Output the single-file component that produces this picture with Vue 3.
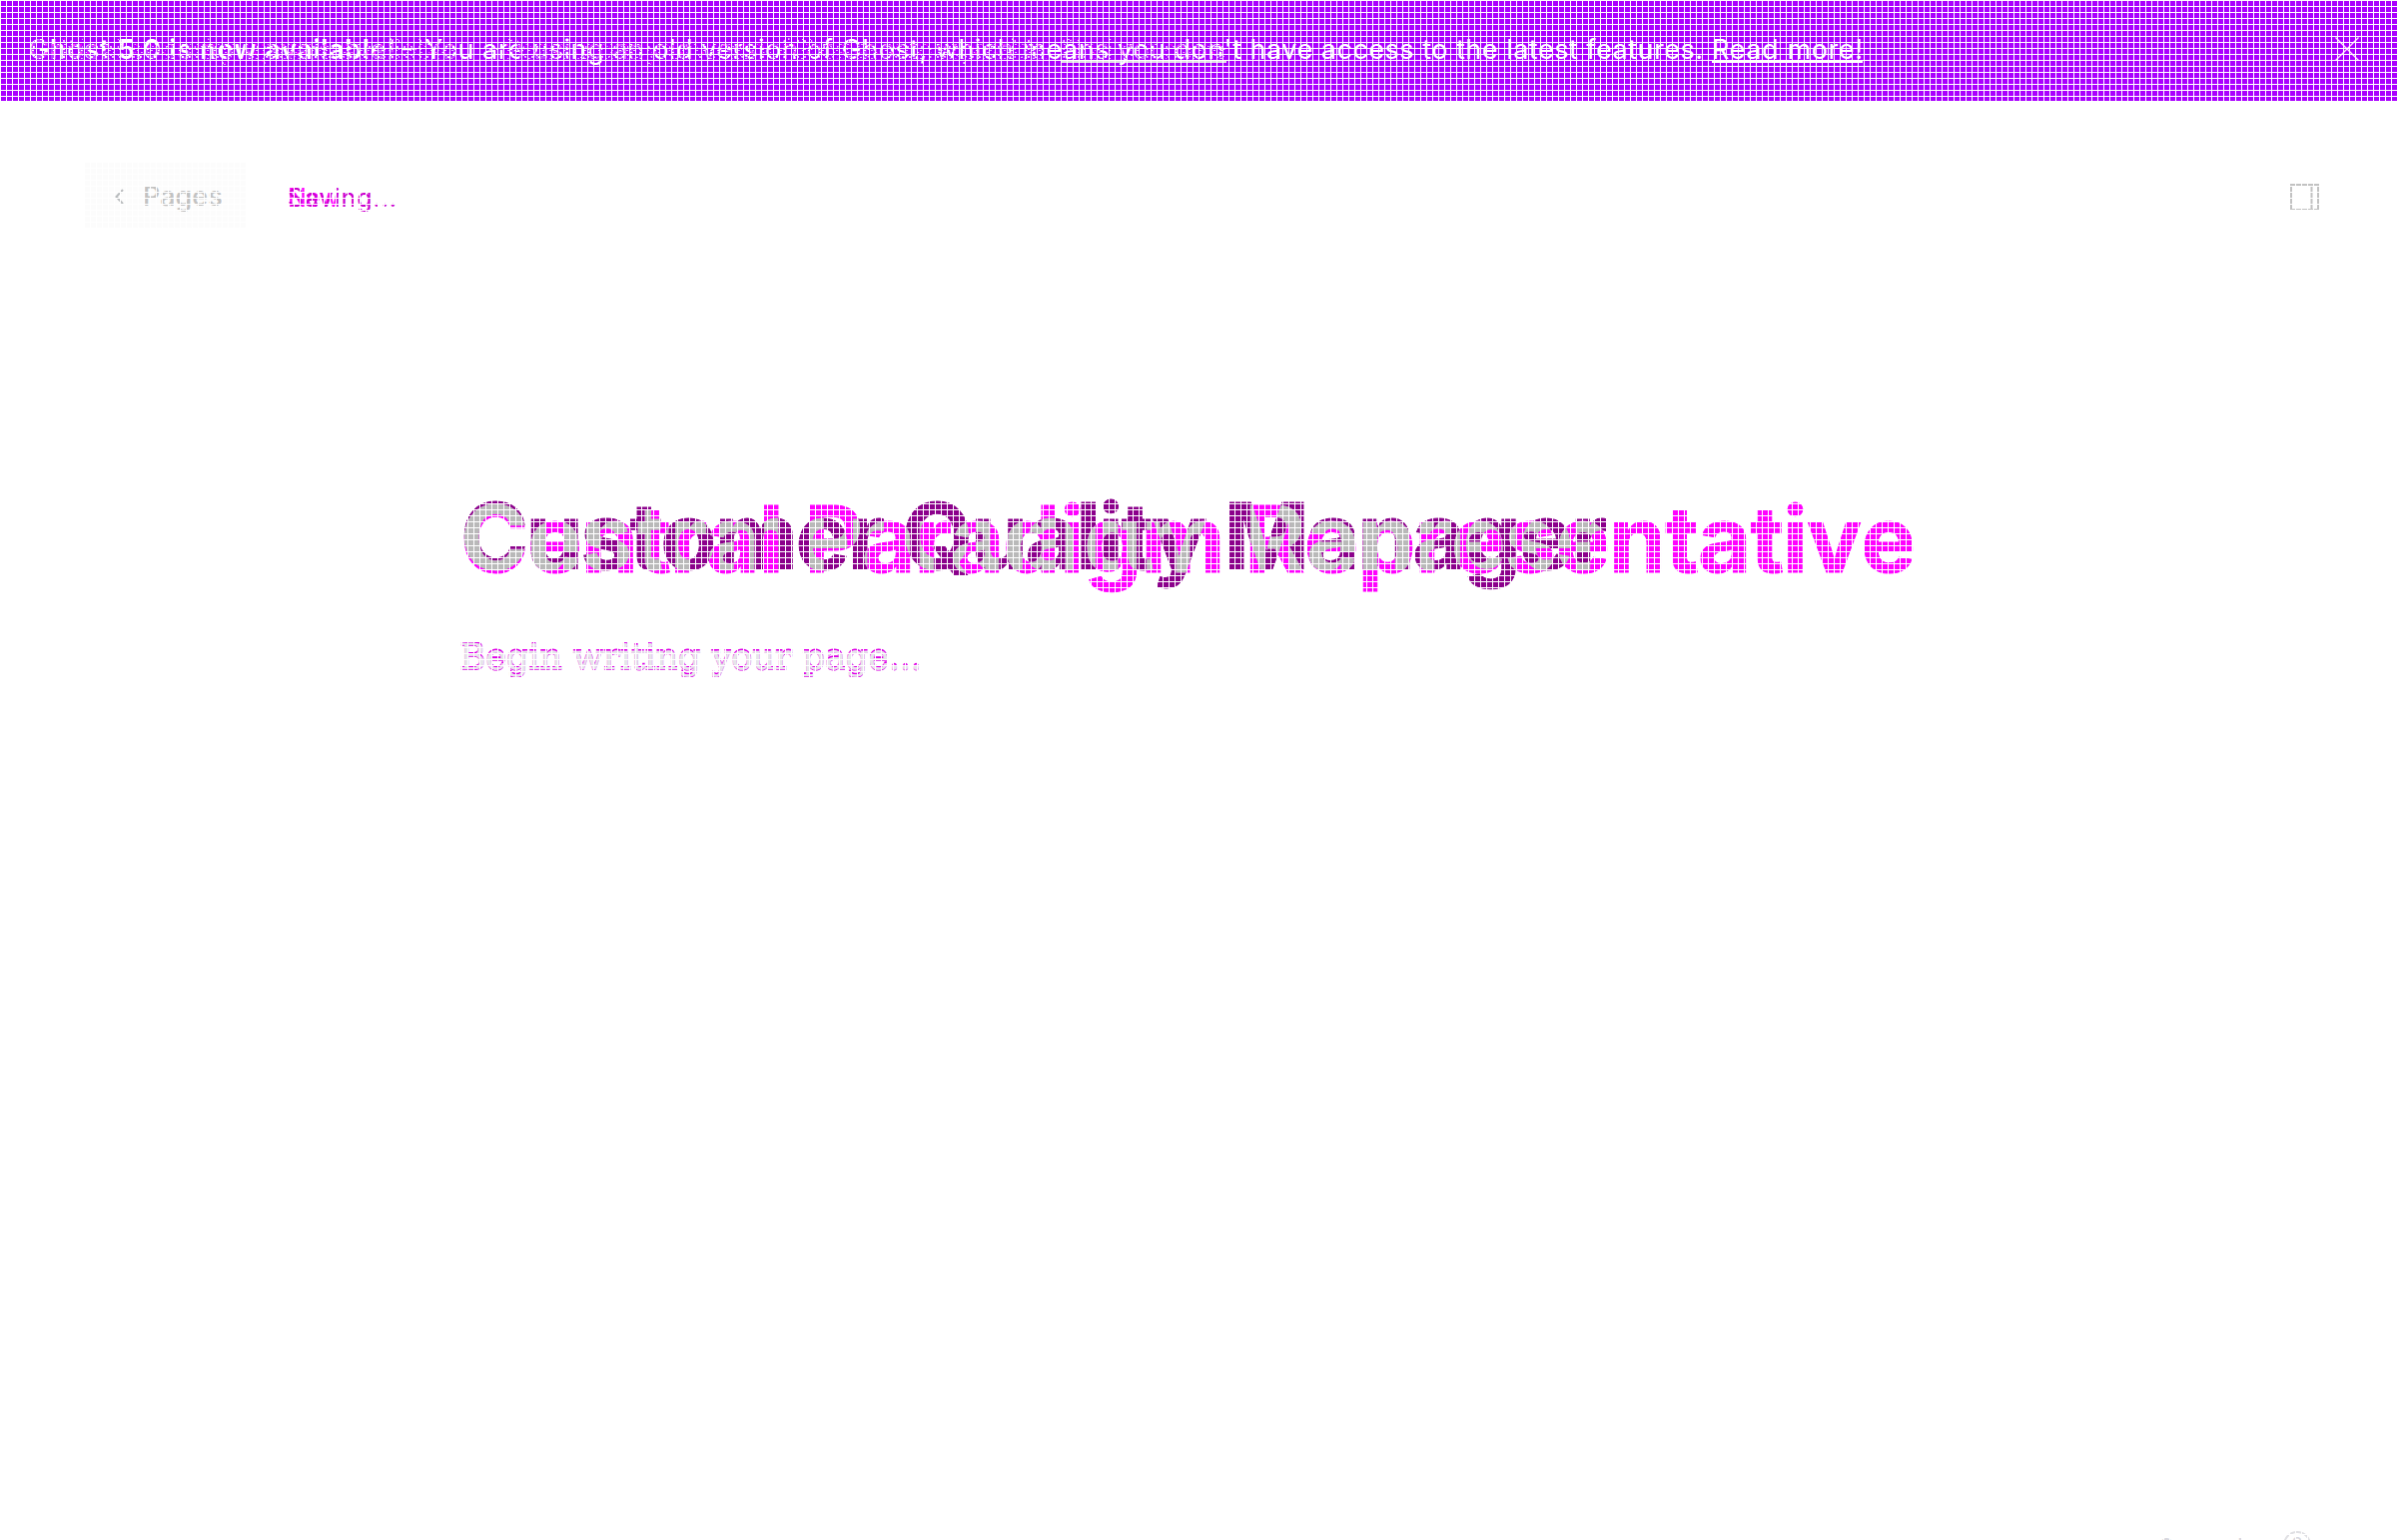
<script setup>
const oldTitle = 'Customer Quality Manager'
const newTitle = 'Central Paradigm Representative'
const placeholder = 'Begin writing your page...'
</script>

<template>
  <div class="screen">
    <header class="banner">
      <svg class="notice" width="1900" height="101">
        <defs>
          <pattern id="speckle" width="7" height="8" patternUnits="userSpaceOnUse">
            <rect width="7" height="8" fill="#a0f" />
            <path d="M0 0h2v2h-2zM4 2h2v1h-2zM1 4h2v1h-2zM5 6h2v2h-2z" fill="#fff" />
            <path d="M3 4h2v2h-2zM1 6h1v2h-1z" fill="#f0f" />
          </pattern>
        </defs>
        <rect x="1062" y="61" width="166" height="2" fill="#e0e0e6" />
        <g class="notice-new">
          <text x="29" y="59" textLength="367" class="strong">Ghost 5.0 is now available!</text>
          <text x="403" y="59" textLength="1302">– You are using an old version of Ghost, which means you don't have access to the latest features.</text>
          <text x="1714" y="59" textLength="151">Read more!</text>
        </g>
        <g class="notice-old">
          <text x="30" y="59" class="strong">Critical security update available</text>
          <text x="490" y="59" textLength="560">– Please update your version of Ghost as soon as possible.</text>
          <text x="1062" y="59" textLength="166">Find out more</text>
        </g>
        <rect x="1714" y="60" width="151" height="3" fill="#fff" />
      </svg>
      <svg class="close" width="24" height="24" viewBox="0 0 24 24">
        <path d="M.5.5l23 23M23.5.5l-23 23" />
      </svg>
    </header>

    <nav class="toolbar">
      <button class="back">
        <svg width="9" height="16" viewBox="0 0 9 16"><path d="M8 1L1.500 8 8 15" /></svg>
        <span>Pages</span>
      </button>
      <svg class="status" width="130" height="40">
        <text x="0" y="24" fill="#f0f" textLength="52">New</text>
        <text x="0" y="24" fill="#cc00d0" textLength="109">Saving...</text>
      </svg>
      <svg class="panel" width="29" height="27" viewBox="0 0 29 27">
        <path d="M1 1h27v25H1zM21.500 1v25" />
      </svg>
    </nav>

    <main class="editor">
      <svg class="title" width="1480" height="120">
        <defs>
          <mask id="title-overlap" maskUnits="userSpaceOnUse" x="0" y="0" width="1480" height="120">
            <text x="1" y="82.500" textLength="1457" fill="#fff" stroke="#fff">{{ newTitle }}</text>
          </mask>
        </defs>
        <text x="1" y="80" textLength="1149" fill="#8b008b" stroke="#8b008b">{{ oldTitle }}</text>
        <text x="1" y="82.500" textLength="1457" fill="#f0f" stroke="#f0f">{{ newTitle }}</text>
        <text x="1" y="80" textLength="1149" fill="#b9b9b9" stroke="#b9b9b9" mask="url(#title-overlap)">{{ oldTitle }}</text>
      </svg>
      <svg class="body" width="600" height="60">
        <text x="0" y="39" textLength="463" fill="#e000e8">{{ placeholder }}</text>
        <text x="0" y="42" textLength="463" fill="#e000e8">{{ placeholder }}</text>
        <text class="body-core" x="0" y="40.500" textLength="463">{{ placeholder }}</text>
      </svg>
    </main>

    <footer class="footer">
      <span class="words">0 words</span>
      <span class="help">?</span>
    </footer>
    <div class="grid"></div>
  </div>
</template>

<style>
body { margin: 0; overflow: hidden; }
</style>

<style scoped>
.screen {
  position: relative;
  display: flex;
  flex-direction: column;
  width: 2400px;
  height: 1542px;
  overflow: hidden;
  background: #fff;
  font-family: Inter, sans-serif;
}
svg { display: block; flex: none; }
.banner {
  display: flex;
  justify-content: space-between;
  height: 101px;
  background: #a0f;
}
.notice { font-size: 27px; }
.notice-new { fill: #fff; }
.notice-old { fill: url(#speckle); opacity: .75; }
.strong { font-weight: 600; }
.close { margin: 37px 38px 0 0; fill: none; stroke: #ffe0ff; stroke-width: 1.4; }
.toolbar {
  display: flex;
  align-items: flex-start;
  padding: 62px 78px 0 85px;
}
.back {
  display: flex;
  align-items: center;
  box-sizing: border-box;
  width: 161px;
  height: 66px;
  padding: 2px 0 0 30px;
  gap: 19px;
  border: 0;
  background: #fcfcfc;
  color: #c2c2c2;
  font: 500 27px/64px Inter, sans-serif;
}
.back svg { fill: none; stroke: #b9bcbe; stroke-width: 2; }
.status { margin: 20px 0 0 42px; font-size: 25px; }
.panel { margin: 21px 0 0 auto; fill: none; stroke: #c2c2c2; stroke-width: 2; }
.editor { display: flex; flex-direction: column; padding: 261px 0 0 460px; }
.title { font-size: 92px; font-weight: 700; font-kerning: none; stroke-width: 1; }
.body { margin-top: 19px; font-family: "DejaVu Serif", serif; font-size: 36px; }
.body-core { fill: #e6e6ea; stroke: #ececf0; stroke-width: .4; }
.footer {
  display: flex;
  align-items: flex-start;
  justify-content: flex-end;
  gap: 26px;
  height: 9px;
  margin-top: auto;
  padding-right: 86px;
  color: #d8d8de;
  font-size: 26px;
  line-height: 28px;
}
.words { padding-top: 3px; }
.help {
  box-sizing: border-box;
  width: 28px;
  height: 28px;
  border: 2px solid #e0e0e4;
  border-radius: 50%;
  text-align: center;
  font-size: 20px;
  line-height: 24px;
}
.grid {
  position: absolute;
  inset: 0;
  background-size: 6px 6px;
  background-image:
    linear-gradient(90deg, #fff 1px, transparent 1px),
    linear-gradient(#fff 1px, transparent 1px);
}
</style>
